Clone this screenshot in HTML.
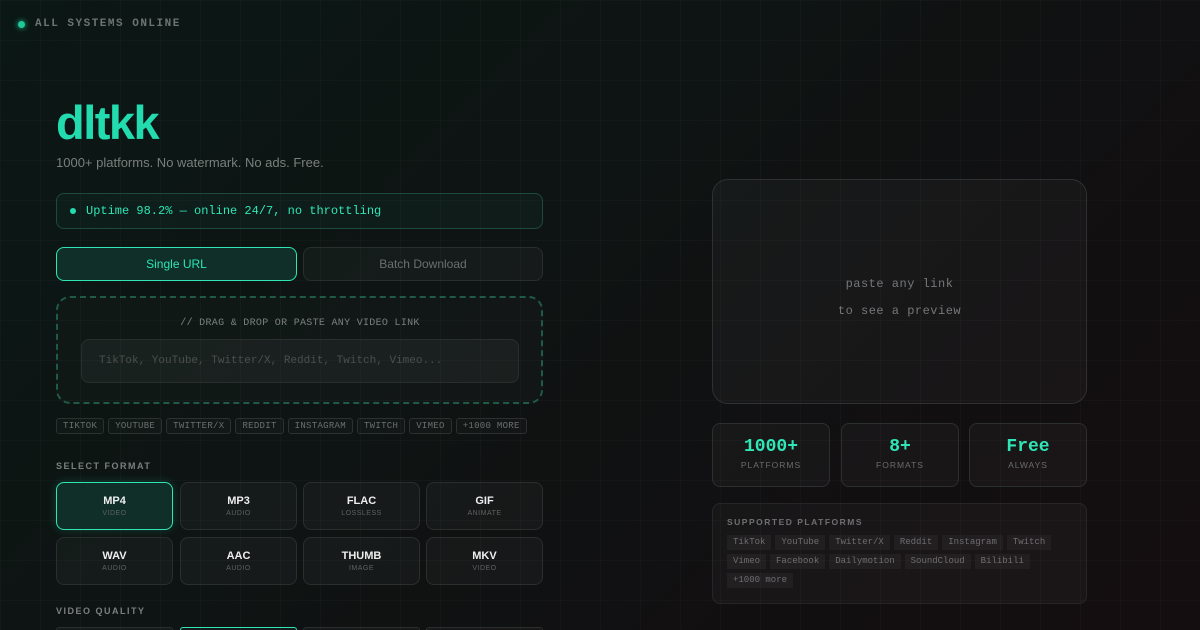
<!DOCTYPE html><html><head><meta charset="utf-8"><style>
*{box-sizing:border-box;margin:0;padding:0}
html,body{width:1200px;height:630px;overflow:hidden}
body{position:relative;font-family:"Liberation Sans",sans-serif;
background:linear-gradient(135deg,#0b1714 0%,#0e1413 40%,#120f11 75%,#140e10 100%);}
.grid{position:absolute;inset:0;background-image:linear-gradient(rgba(255,255,255,.02) 1px,transparent 1px),linear-gradient(90deg,rgba(255,255,255,.02) 1px,transparent 1px);background-size:40px 40px}
.m{font-family:"Liberation Mono",monospace}
.a{position:absolute}
.box{position:absolute;border:1px solid #2a2e2d;border-radius:8px;background:rgba(255,255,255,.03)}
.tag{display:inline-block;border:1px solid #2c302f;border-radius:3px;font:9px "Liberation Mono",monospace;color:#6a6f6d;padding:2px 6px;margin-right:4px;letter-spacing:.3px;background:rgba(255,255,255,.02)}
.fmt{position:absolute;width:117px;height:48px;border:1px solid #2a2e2d;border-radius:8px;background:rgba(255,255,255,.03);text-align:center}
.fmt b{display:block;color:#eee;font-size:11px;margin-top:12px}
.fmt i{display:block;font-style:normal;color:#5d625f;font-size:7px;margin-top:3px;letter-spacing:.5px}
.st{position:absolute;top:423px;width:118px;height:64px;border:1px solid #2c2f30;border-radius:8px;background:rgba(255,255,255,.03);text-align:center}
.st b{display:block;font:bold 18px "Liberation Mono",monospace;color:#2ee6b6;margin-top:13px}
.st i{display:block;font-style:normal;font-size:8.5px;color:#6b6b6e;letter-spacing:1px;margin-top:3px}
.pt{display:inline-block;font:9px/11px "Liberation Mono",monospace;color:#6e6d70;background:rgba(255,255,255,.04);padding:2px 6px;margin:0 4px 4px 0}
</style></head><body><div class="grid"></div>
<div class="a" style="left:18px;top:21px;width:7px;height:7px;border-radius:50%;background:#1fc99a;box-shadow:0 0 6px #1fc99a"></div>
<div class="a m" style="left:35px;top:18px;font-size:11px;color:#6c7472;letter-spacing:1.5px;font-weight:bold">ALL SYSTEMS ONLINE</div>
<div class="a" style="left:56px;top:95px;font:bold 47px 'Liberation Sans',sans-serif;color:#22dcb0;letter-spacing:-1.5px">dltkk</div>
<div class="a" style="left:56px;top:155px;font-size:13px;color:#7a7f7d">1000+ platforms. No watermark. No ads. Free.</div>
<div class="box" style="left:56px;top:193px;width:487px;height:36px;border-color:#1d4a3d;background:rgba(30,200,150,.05)">
<div class="a" style="left:13px;top:14px;width:6px;height:6px;border-radius:50%;background:#22dcb0"></div>
<div class="a m" style="left:29px;top:10px;font-size:12px;color:#2ee6b6">Uptime 98.2% — online 24/7, no throttling</div></div>
<div class="box" style="left:56px;top:247px;width:241px;height:34px;border-color:#2ee6b6;background:#0f2f28;text-align:center;line-height:32px;color:#2ee6b6;font-size:12px">Single URL</div>
<div class="box" style="left:303px;top:247px;width:240px;height:34px;text-align:center;line-height:32px;color:#6b6f6d;font-size:12px">Batch Download</div>
<div class="box" style="left:56px;top:296px;width:487px;height:108px;border:2px dashed #1f5a47;border-radius:14px;background:rgba(255,255,255,.015)"></div>
<div class="a m" style="left:0;width:600px;text-align:center;top:318px;font-size:10px;color:#7b807e;letter-spacing:.3px">// DRAG &amp; DROP OR PASTE ANY VIDEO LINK</div>
<div class="box" style="left:81px;top:339px;width:438px;height:44px;background:rgba(255,255,255,.04)"><div class="a m" style="left:17px;top:15px;font-size:11px;color:#4a4f4d">TikTok, YouTube, Twitter/X, Reddit, Twitch, Vimeo...</div></div>
<div class="a" style="left:56px;top:415px;white-space:nowrap"><span class="tag">TIKTOK</span><span class="tag">YOUTUBE</span><span class="tag">TWITTER/X</span><span class="tag">REDDIT</span><span class="tag">INSTAGRAM</span><span class="tag">TWITCH</span><span class="tag">VIMEO</span><span class="tag">+1000 MORE</span></div>
<div class="a" style="left:56px;top:461px;font-size:9px;color:#7b7f7e;letter-spacing:1.5px;font-weight:bold">SELECT FORMAT</div>
<div class="fmt" style="left:56px;top:482px;border-color:#2ee6b6;background:#0f2f28;box-shadow:0 0 10px rgba(46,230,182,.2)"><b>MP4</b><i>VIDEO</i></div>
<div class="fmt" style="left:180px;top:482px"><b>MP3</b><i>AUDIO</i></div>
<div class="fmt" style="left:303px;top:482px"><b>FLAC</b><i>LOSSLESS</i></div>
<div class="fmt" style="left:426px;top:482px"><b>GIF</b><i>ANIMATE</i></div>
<div class="fmt" style="left:56px;top:537px"><b>WAV</b><i>AUDIO</i></div>
<div class="fmt" style="left:180px;top:537px"><b>AAC</b><i>AUDIO</i></div>
<div class="fmt" style="left:303px;top:537px"><b>THUMB</b><i>IMAGE</i></div>
<div class="fmt" style="left:426px;top:537px"><b>MKV</b><i>VIDEO</i></div>
<div class="a" style="left:56px;top:606px;font-size:9px;color:#7b7f7e;letter-spacing:1.5px;font-weight:bold">VIDEO QUALITY</div>
<div class="fmt" style="left:56px;top:627px;height:3px;border-bottom:0;border-radius:8px 8px 0 0"></div><div class="fmt" style="left:180px;top:627px;height:3px;border-bottom:0;border-radius:8px 8px 0 0;border-color:#2ee6b6"></div><div class="fmt" style="left:303px;top:627px;height:3px;border-bottom:0;border-radius:8px 8px 0 0"></div><div class="fmt" style="left:426px;top:627px;height:3px;border-bottom:0;border-radius:8px 8px 0 0"></div>
<div class="box" style="left:712px;top:179px;width:375px;height:225px;border-radius:16px;border-color:#2e3031;background:rgba(255,255,255,.03)"></div>
<div class="a m" style="left:712px;width:375px;text-align:center;top:271px;font-size:12px;color:#75777a;line-height:27px;letter-spacing:.5px">paste any link<br>to see a preview</div>
<div class="st" style="left:712px"><b>1000+</b><i>PLATFORMS</i></div>
<div class="st" style="left:841px"><b>8+</b><i>FORMATS</i></div>
<div class="st" style="left:969px"><b>Free</b><i>ALWAYS</i></div>
<div class="box" style="left:712px;top:503px;width:375px;height:101px;border-color:#262628;padding:13px 0 0 14px">
<div style="font-size:8.5px;color:#6f6f72;letter-spacing:1.5px;font-weight:bold;margin-bottom:8px">SUPPORTED PLATFORMS</div>
<div style="width:340px;line-height:0"><span class="pt">TikTok</span><span class="pt">YouTube</span><span class="pt">Twitter/X</span><span class="pt">Reddit</span><span class="pt">Instagram</span><span class="pt">Twitch</span><span class="pt">Vimeo</span><span class="pt">Facebook</span><span class="pt">Dailymotion</span><span class="pt">SoundCloud</span><span class="pt">Bilibili</span><span class="pt">+1000 more</span></div></div>
</body></html>
